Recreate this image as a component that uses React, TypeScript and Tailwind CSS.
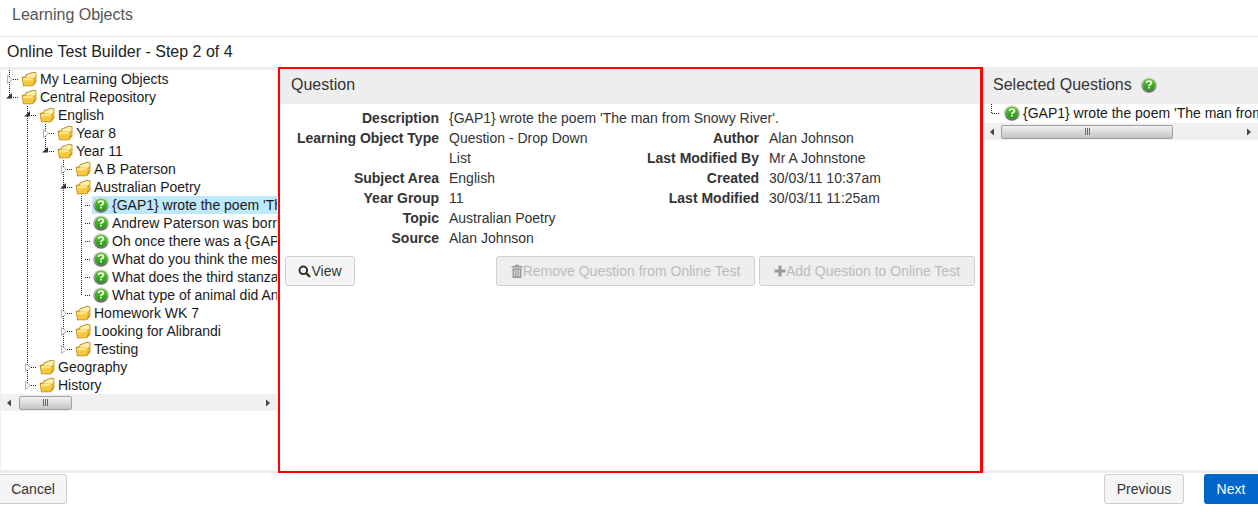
const FONT = "font-['Liberation_Sans',Arial,sans-serif]"

type Row = {
  label: string
  level: number
  guides?: number[]
  next?: boolean
  open?: boolean
  question?: boolean
  selected?: boolean
}

const rows: Row[] = [
  { label: 'My Learning Objects', level: 0, next: true },
  { label: 'Central Repository', level: 0, open: true },
  { label: 'English', level: 1, open: true, next: true },
  { label: 'Year 8', level: 2, guides: [1], next: true },
  { label: 'Year 11', level: 2, guides: [1], open: true },
  { label: 'A B Paterson', level: 3, guides: [1], next: true },
  { label: 'Australian Poetry', level: 3, guides: [1], open: true, next: true },
  { label: "{GAP1} wrote the poem 'The man from Snowy River'.", level: 4, guides: [1, 3], next: true, question: true, selected: true },
  { label: 'Andrew Paterson was born in 1864', level: 4, guides: [1, 3], next: true, question: true },
  { label: 'Oh once there was a {GAP1}', level: 4, guides: [1, 3], next: true, question: true },
  { label: 'What do you think the message is', level: 4, guides: [1, 3], next: true, question: true },
  { label: 'What does the third stanza mean', level: 4, guides: [1, 3], next: true, question: true },
  { label: 'What type of animal did Andrew', level: 4, guides: [1, 3], question: true },
  { label: 'Homework WK 7', level: 3, guides: [1], next: true },
  { label: 'Looking for Alibrandi', level: 3, guides: [1], next: true },
  { label: 'Testing', level: 3, guides: [1] },
  { label: 'Geography', level: 1, next: true },
  { label: 'History', level: 1 },
]

function QuestionIcon() {
  return (
    <svg width="16" height="16" viewBox="0 0 16 16" className="shrink-0">
      <defs>
        <linearGradient id="rim" x1="0" y1="0" x2="0" y2="1">
          <stop offset="0" stopColor="#e2e2e2" />
          <stop offset="1" stopColor="#666666" />
        </linearGradient>
        <linearGradient id="ball" x1="0" y1="0" x2="0" y2="1">
          <stop offset="0" stopColor="#66cc33" />
          <stop offset="1" stopColor="#1c9912" />
        </linearGradient>
      </defs>
      <circle cx="8" cy="8" r="7.8" fill="url(#rim)" />
      <circle cx="8" cy="7.6" r="6.1" fill="url(#ball)" />
      <path d="M5.6 6c0-1.4 1.1-2 2.4-2s2.4.7 2.4 1.9c0 1.8-2.4 1.5-2.4 3" fill="none" stroke="#fff" strokeWidth="1.7" />
      <rect x="7.1" y="9.8" width="1.8" height="1.7" fill="#fff" />
    </svg>
  )
}

function FolderIcon() {
  return (
    <svg width="16" height="16" viewBox="0 0 16 16" className="shrink-0">
      <path d="M0.7 6 L4.5 5.2 L4.5 3.6 L9.5 1.8 L11.5 0.8 L15.4 1.6 L15.4 11 L12 15.3 L2 15.3 Z" fill="#b98a1a" />
      <path d="M5.3 4.2 L10 2.6 L11.6 1.7 L14.6 2.3 L14.6 10 L12 12 L5.3 9 Z" fill="#fdf0b0" />
      <path d="M1.6 6.9 L6 6 L11.6 6.6 L12.2 14.4 L2.7 14.4 Z" fill="#f6c83c" />
      <path d="M2 7.4 L6 6.6 L11.1 7.2 L11.2 9 L2.2 9.6 Z" fill="#fde68c" />
      <path d="M12.2 7 L14.6 5 L14.6 10.6 L12.4 13.6 Z" fill="#e0ac2a" />
    </svg>
  )
}

function Connector({ row }: { row: Row }) {
  const x = 9 + row.level * 18
  const w = x + 11
  return (
    <svg width={w} height="18" className="shrink-0">
      <g stroke="#222" strokeDasharray="1 1" fill="none">
        {(row.guides ?? []).map(g => (
          <path key={g} d={`M${9.5 + g * 18} 0V18`} />
        ))}
        <path d={`M${x + 0.5} 0V${row.next ? 18 : 9}`} />
        <path d={`M${x + 4} 9.5H${x + 9}`} />
      </g>
      {!row.question && (row.open ? (
        <path d={`M${x - 3} 10.5L${x + 3} 10.5L${x + 3} 5Z`} fill="#333" />
      ) : (
        <path d={`M${x - 1.5} 5.5L${x + 3.5} 9.5L${x - 1.5} 13.5Z`} fill="#fff" stroke="#b5b5b5" />
      ))}
    </svg>
  )
}

function TreeRow({ row }: { row: Row }) {
  return (
    <div className="flex h-[18px] items-center whitespace-nowrap">
      <Connector row={row} />
      <div className={`flex h-[18px] flex-1 items-center pl-px ${row.selected ? 'bg-[#bee8fb]' : ''}`}>
        {row.question ? <QuestionIcon /> : <FolderIcon />}
        <span className="ml-[3px] text-sm leading-[18px] text-[#1a1a1a]">{row.label}</span>
      </div>
    </div>
  )
}

function Scrollbar({ thumb }: { thumb: string }) {
  return (
    <div className="flex h-[17px] items-center bg-[#f0f0f0]">
      <svg width="6" height="8" viewBox="0 0 6 8" className="ml-[5px] shrink-0">
        <path d="M5 0.5V7.5L1 4Z" fill="#444" />
      </svg>
      <div className={`flex h-[14px] items-center justify-center gap-px rounded-[2px] border border-[#a0a0a0] bg-gradient-to-b from-[#f2f2f2] to-[#c4c4c4] ${thumb}`}>
        <span className="h-[7px] w-px bg-[#666]" />
        <span className="h-[7px] w-px bg-[#666]" />
        <span className="h-[7px] w-px bg-[#666]" />
      </div>
      <svg width="6" height="8" viewBox="0 0 6 8" className="ml-auto mr-[6px] shrink-0">
        <path d="M1 0.5V7.5L5 4Z" fill="#444" />
      </svg>
    </div>
  )
}

function Detail({ label, value, w }: { label: string; value: string; w: string }) {
  return (
    <div className="flex text-sm leading-5">
      <div className={`shrink-0 text-right font-bold text-[#333] ${w}`}>{label}</div>
      <div className="ml-[10px] text-[#333]">{value}</div>
    </div>
  )
}

function GrayButton({ children, className }: { children: React.ReactNode; className?: string }) {
  return (
    <button className={`flex h-[30px] items-center justify-center rounded-[3px] border border-[#d0d0d0] text-sm ${className ?? ''}`}>
      {children}
    </button>
  )
}

export default function App() {
  return (
    <div className={`h-[515px] w-[1258px] overflow-hidden bg-white ${FONT}`}>
      <div className="flex h-[37px] items-center border-b border-[#e5e5e5] pb-[6px] pl-3 text-base text-[#555]">Learning Objects</div>
      <div className="flex h-[30px] items-center pl-[7px] text-base text-[#222]">Online Test Builder - Step 2 of 4</div>

      <div className="flex h-[406px] bg-[#eeeeee]">
        {/* Tree */}
        <div className="h-full w-[278px] shrink-0 pb-[3px] pl-px pr-px pt-[3px]">
          <div className="h-full overflow-hidden bg-white">
            <div className="-ml-px w-[277px] overflow-hidden">
              {rows.map(row => <TreeRow key={row.label} row={row} />)}
            </div>
            <Scrollbar thumb="ml-[7px] w-[53px]" />
          </div>
        </div>

        {/* Question */}
        <div className="h-full w-[705px] shrink-0 border-2 border-r-[3px] border-[#ff0000] bg-white">
          <div className="flex h-[35px] items-center bg-[#eeeeee] pb-[3px] pl-[11px] text-base text-[#333]">Question</div>
          <div className="pt-[4px]">
            <Detail label="Description" value="{GAP1} wrote the poem 'The man from Snowy River'." w="w-[159px]" />
            <div className="flex">
              <div className="w-[360px]">
                <div className="flex text-sm leading-5">
                  <div className="w-[159px] shrink-0 text-right font-bold text-[#333]">Learning Object Type</div>
                  <div className="ml-[10px] w-[150px] text-[#333]">Question - Drop Down List</div>
                </div>
                <Detail label="Subject Area" value="English" w="w-[159px]" />
                <Detail label="Year Group" value="11" w="w-[159px]" />
                <Detail label="Topic" value="Australian Poetry" w="w-[159px]" />
                <Detail label="Source" value="Alan Johnson" w="w-[159px]" />
              </div>
              <div>
                <Detail label="Author" value="Alan Johnson" w="w-[119px]" />
                <Detail label="Last Modified By" value="Mr A Johnstone" w="w-[119px]" />
                <Detail label="Created" value="30/03/11 10:37am" w="w-[119px]" />
                <Detail label="Last Modified" value="30/03/11 11:25am" w="w-[119px]" />
              </div>
            </div>
          </div>
          <div className="mt-2 flex pl-[5px] pr-[5px]">
            <GrayButton className="w-[70px] bg-[#f5f5f5] text-[#333]">
              <svg width="13" height="13" viewBox="0 0 13 13">
                <circle cx="5.3" cy="5.3" r="3.8" fill="none" stroke="#333" strokeWidth="2" />
                <path d="M8.2 8.2L12 12" stroke="#333" strokeWidth="2.4" />
              </svg>
              View
            </GrayButton>
            <GrayButton className="ml-auto w-[259px] bg-[#eeeeee] text-[#bbbbbb]">
              <svg width="12" height="14" viewBox="0 0 12 14">
                <path d="M0.5 2H4V0.7H8V2H11.5V3.5H0.5Z M1.5 4.2H10.5V14H1.5Z" fill="#999" />
                <path d="M3.7 5.5V12.5M6 5.5V12.5M8.3 5.5V12.5" stroke="#eee" strokeWidth="0.9" />
              </svg>
              Remove Question from Online Test
            </GrayButton>
            <GrayButton className="ml-1 w-[216px] bg-[#eeeeee] text-[#bbbbbb]">
              <svg width="12" height="12" viewBox="0 0 12 12">
                <path d="M4.5 0.5H7.5V4.5H11.5V7.5H7.5V11.5H4.5V7.5H0.5V4.5H4.5Z" fill="#999" />
              </svg>
              Add Question to Online Test
            </GrayButton>
          </div>
        </div>

        {/* Selected */}
        <div className="h-full min-w-0 flex-1 overflow-hidden pb-[3px]">
          <div className="flex h-[37px] items-center pb-[2px] pl-[10px] text-base text-[#333]">
            Selected Questions
            <span className="ml-[9px]"><QuestionIcon /></span>
          </div>
          <div className="h-[366px] bg-white pl-px">
            <div className="flex h-[18px] items-center overflow-hidden whitespace-nowrap">
              <svg width="20" height="18" className="shrink-0">
                <path d="M7.5 0V9M8 9.5H15" stroke="#222" strokeDasharray="1 1" fill="none" />
              </svg>
              <QuestionIcon />
              <span className="ml-[3px] text-sm leading-[18px] text-[#1a1a1a]">{"{GAP1} wrote the poem 'The man from Snowy River'."}</span>
            </div>
            <div className="pt-px">
              <Scrollbar thumb="ml-[6px] w-[172px]" />
            </div>
          </div>
        </div>
      </div>

      <div className="flex pt-px">
        <button className="h-[30px] w-[67px] rounded-r-[3px] border border-l-0 border-[#cfcfcf] bg-[#f5f5f5] text-sm text-[#333]">Cancel</button>
        <button className="ml-auto h-[30px] w-[80px] rounded-[3px] border border-[#cfcfcf] bg-[#f5f5f5] text-sm text-[#333]">Previous</button>
        <button className="ml-5 h-[30px] w-[54px] rounded-l-[3px] bg-[#0066cc] text-sm text-white">Next</button>
      </div>
    </div>
  )
}
